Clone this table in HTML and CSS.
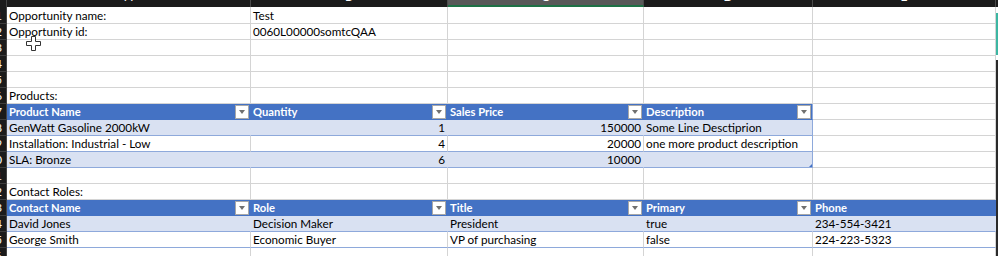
FILE: index.html
```html
<!DOCTYPE html>
<html>
<head>
<meta charset="utf-8">
<link rel="stylesheet" href="styles.css">
</head>
<body>
<div class="sheet">
  <div class="edge"></div>
  <!-- column headers -->
  <div class="corner"></div>
  <div class="ch"><span>A</span></div>
  <div class="ch"><span>B</span></div>
  <div class="ch sel"><span>C</span></div>
  <div class="ch"><span>D</span></div>
  <div class="ch"><span>E</span></div>
  <!-- row 1 -->
  <div class="rh t1"><span>1</span></div>
  <div class="c t1">Opportunity name:</div>
  <div class="c t1">Test</div>
  <div class="c t1"></div>
  <div class="c t1"></div>
  <div class="c t1"></div>
  <!-- row 2 -->
  <div class="rh"><span>2</span></div>
  <div class="c">Opportunity id:</div>
  <div class="c">0060L00000somtcQAA</div>
  <div class="c"></div>
  <div class="c"></div>
  <div class="c"></div>
  <!-- row 3 -->
  <div class="rh"><span>3</span></div>
  <div class="c"></div>
  <div class="c"></div>
  <div class="c"></div>
  <div class="c"></div>
  <div class="c"></div>
  <!-- row 4 -->
  <div class="rh"><span>4</span></div>
  <div class="c"></div>
  <div class="c"></div>
  <div class="c"></div>
  <div class="c"></div>
  <div class="c"></div>
  <!-- row 5 -->
  <div class="rh"><span>5</span></div>
  <div class="c"></div>
  <div class="c"></div>
  <div class="c"></div>
  <div class="c"></div>
  <div class="c"></div>
  <!-- row 6 -->
  <div class="rh"><span>6</span></div>
  <div class="c">Products:</div>
  <div class="c"></div>
  <div class="c"></div>
  <div class="c"></div>
  <div class="c"></div>
  <!-- row 7 products header -->
  <div class="rh"><span>7</span></div>
  <div class="c th"><span>Product Name</span><i class="flt"></i></div>
  <div class="c th"><span>Quantity</span><i class="flt"></i></div>
  <div class="c th"><span>Sales Price</span><i class="flt"></i></div>
  <div class="c th bd"><span>Description</span><i class="flt"></i></div>
  <div class="c"></div>
  <!-- row 8 -->
  <div class="rh"><span>8</span></div>
  <div class="c b">GenWatt Gasoline 2000kW</div>
  <div class="c b r">1</div>
  <div class="c b r">150000</div>
  <div class="c b bd">Some Line Desctiprion</div>
  <div class="c"></div>
  <!-- row 9 -->
  <div class="rh"><span>9</span></div>
  <div class="c w">Installation: Industrial - Low</div>
  <div class="c w r">4</div>
  <div class="c w r">20000</div>
  <div class="c w bd">one more product description</div>
  <div class="c"></div>
  <!-- row 10 -->
  <div class="rh"><span>10</span></div>
  <div class="c b">SLA: Bronze</div>
  <div class="c b r">6</div>
  <div class="c b r">10000</div>
  <div class="c b bd grip"><i class="handle"></i></div>
  <div class="c"></div>
  <!-- row 11 -->
  <div class="rh"><span>11</span></div>
  <div class="c"></div>
  <div class="c"></div>
  <div class="c"></div>
  <div class="c"></div>
  <div class="c"></div>
  <!-- row 12 -->
  <div class="rh"><span>12</span></div>
  <div class="c">Contact Roles:</div>
  <div class="c"></div>
  <div class="c"></div>
  <div class="c"></div>
  <div class="c"></div>
  <!-- row 13 contacts header -->
  <div class="rh"><span>13</span></div>
  <div class="c th"><span>Contact Name</span><i class="flt"></i></div>
  <div class="c th"><span>Role</span><i class="flt"></i></div>
  <div class="c th"><span>Title</span><i class="flt"></i></div>
  <div class="c th"><span>Primary</span><i class="flt"></i></div>
  <div class="c th"><span>Phone</span></div>
  <!-- row 14 -->
  <div class="rh"><span>14</span></div>
  <div class="c b">David Jones</div>
  <div class="c b">Decision Maker</div>
  <div class="c b">President</div>
  <div class="c b">true</div>
  <div class="c b">234-554-3421</div>
  <!-- row 15 -->
  <div class="rh"><span>15</span></div>
  <div class="c w">George Smith</div>
  <div class="c w">Economic Buyer</div>
  <div class="c w">VP of purchasing</div>
  <div class="c w">false</div>
  <div class="c w">224-223-5323</div>
  <!-- row 16 -->
  <div class="rh"><span>16</span></div>
  <div class="c"></div>
  <div class="c"></div>
  <div class="c"></div>
  <div class="c"></div>
  <div class="c"></div>

  <svg class="cursor" width="15" height="15" viewBox="0 0 15 15">
    <path d="M5.5 0.5h4v5h5v4h-5v5h-4v-5h-5v-4h5z" fill="#fff" stroke="#333" stroke-width="1"/>
  </svg>
</div>
</body>
</html>
```

FILE: styles.css
```css
* { box-sizing: border-box; }
html, body { margin: 0; padding: 0; background: #fff; overflow: hidden; }
body { font-family: Lato, "Open Sans", sans-serif; font-size: 11.7px; color: #000; }

.sheet {
  position: relative;
  display: grid;
  grid-template-columns: 7px 244px 197px 196px 169px 183px 2px;
  grid-template-rows: 7px 17px repeat(15, 16px);
  width: 998px;
  height: 256px;
  overflow: hidden;
}

.edge {
  grid-column: 7;
  grid-row: 1 / span 17;
  background: linear-gradient(#1b1b1b 0 7px, #fff 7px 13px, #3cb6a2 13px 55px, #fff 55px 60px, #2a2a2a 60px);
}

.corner { background: #1b1b1b; border-right: 1px solid #444; }

.ch {
  background: #1b1b1b;
  border-right: 1px solid #4a4a4a;
  display: flex;
  justify-content: center;
  overflow: hidden;
  color: #fff;
}
.ch span { display: block; height: 12px; line-height: 12px; margin-top: -9px; font-size: 12px; }
.ch.sel { background: #585858; border-bottom: 2px solid #1e7145; }

.rh {
  background: #1b1b1b;
  border-right: 1px solid #444;
  border-bottom: 1px solid #3d3d3d;
  color: #fff;
  display: flex;
  justify-content: flex-end;
  padding-right: 4px;
  overflow: hidden;
  line-height: 15px;
  white-space: nowrap;
}

.c {
  border-right: 1px solid #d4d4d4;
  border-bottom: 1px solid #d4d4d4;
  padding: 0 2px;
  line-height: 15px;
  white-space: nowrap;
  overflow: hidden;
}
.t1 { padding-top: 1px; }

.th {
  background: #4472c4;
  color: #fff;
  font-weight: 700;
  font-size: 11.2px;
  border-right-color: #4472c4;
  border-bottom-color: #4472c4;
  display: flex;
  align-items: center;
  padding-right: 1px;
}
.th span { flex: 1; }
.flt {
  width: 14px;
  height: 14px;
  background: #fff;
  border: 1px solid #a8a8a8;
  display: flex;
  align-items: center;
  justify-content: center;
}
.flt::after {
  content: "";
  border-left: 3.5px solid transparent;
  border-right: 3.5px solid transparent;
  border-top: 4px solid #707070;
}

.b { background: #d9e1f2; border-right-color: #d9e1f2; border-bottom-color: #8ea9db; }
.w { border-bottom-color: #8ea9db; }
.bd { border-right-color: #8ea9db; }
.r { text-align: right; }

.grip { position: relative; }
.handle {
  position: absolute;
  right: 0;
  bottom: 0;
  width: 0;
  height: 0;
  border-left: 3px solid transparent;
  border-bottom: 3px solid #4472c4;
}

.cursor { position: absolute; left: 26px; top: 36px; }
```
